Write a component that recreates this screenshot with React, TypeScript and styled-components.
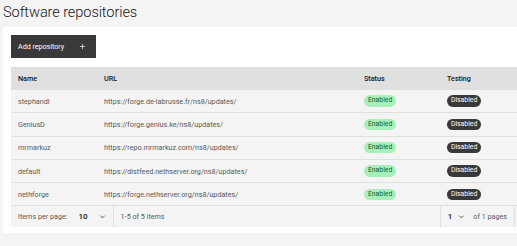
import * as React from "react";
import styled, { createGlobalStyle } from "styled-components";

const GlobalStyle = createGlobalStyle`
  html, body {
    margin: 0;
    padding: 0;
    background: #f4f4f4;
    overflow: hidden;
    font-family: Roboto, "Liberation Sans", sans-serif;
  }
`;

const SPage = styled.div`
  width: 540px;
  padding: 0 0 0 3px;
`;

const STitle = styled.h1`
  margin: 0;
  padding-top: 1px;
  height: 26px;
  font-size: 14.6px;
  font-weight: 300;
  letter-spacing: -0.1px;
  color: #161616;
  line-height: 22px;
`;

const SCard = styled.div`
  background: #ffffff;
  padding: 8px 8px 6px 8px;
`;

const SAddButton = styled.button`
  display: flex;
  align-items: center;
  justify-content: space-between;
  width: 85px;
  height: 23px;
  padding: 0 10px 0 7px;
  border: none;
  background: #393939;
  color: #ffffff;
  font-family: inherit;
  font-size: 7.1px;
  margin-bottom: 9px;
`;

const STable = styled.div`
  width: 100%;
  font-size: 7.2px;
`;

const SRow = styled.div<{ $head?: boolean }>`
  display: grid;
  grid-template-columns: 86px 260px 83px 1fr;
  align-items: center;
  height: ${(p) => (p.$head ? "23px" : "23.3px")};
  box-sizing: border-box;
  padding-left: 7px;
  background: ${(p) => (p.$head ? "#e0e0e0" : "#f4f4f4")};
  border-bottom: ${(p) => (p.$head ? "none" : "1px solid #e0e0e0")};
  color: ${(p) => (p.$head ? "#161616" : "#5a5a5a")};
  font-weight: ${(p) => (p.$head ? 500 : 400)};
`;

const SBadge = styled.span<{ $on: boolean }>`
  display: inline-block;
  width: fit-content;
  padding: 1px 4px;
  border-radius: 8px;
  font-size: 6.8px;
  line-height: 9.5px;
  background: ${(p) => (p.$on ? "#a7f0ba" : "#393939")};
  color: ${(p) => (p.$on ? "#0e6027" : "#ffffff")};
`;

const SFooter = styled.div`
  display: flex;
  align-items: stretch;
  height: 21px;
  background: #f4f4f4;
  color: #5a5a5a;
  font-size: 7.2px;
`;

const SFooterCell = styled.div<{ $grow?: boolean; $border?: boolean; $gap?: number }>`
  display: flex;
  align-items: center;
  gap: ${(p) => p.$gap ?? 11}px;
  padding: 0 7px;
  flex: ${(p) => (p.$grow ? 1 : "none")};
  border-right: ${(p) => (p.$border ? "1px solid #e0e0e0" : "none")};
`;

const SNavCell = styled.div`
  width: 20px;
`;

const SSelect = styled.span<{ $gap?: number }>`
  display: flex;
  align-items: center;
  gap: ${(p) => p.$gap ?? 11}px;
  color: #161616;
  font-size: 8px;
  font-weight: 500;
`;

const Chevron = () => (
  <svg width="7" height="7" viewBox="0 0 16 16" fill="none" stroke="#161616" strokeWidth="1.6">
    <path d="M3 6l5 5 5-5" />
  </svg>
);

const Plus = () => (
  <svg width="7" height="7" viewBox="0 0 16 16" fill="none" stroke="#ffffff" strokeWidth="1.5">
    <path d="M8 2v12M2 8h12" />
  </svg>
);

const repos = [
  { name: "stephandl", url: "https://forge.de-labrusse.fr/ns8/updates/" },
  { name: "GeniusD", url: "https://forge.genius.ke/ns8/updates/" },
  { name: "mrmarkuz", url: "https://repo.mrmarkuz.com/ns8/updates/" },
  { name: "default", url: "https://distfeed.nethserver.org/ns8/updates/" },
  { name: "nethforge", url: "https://forge.nethserver.org/ns8/updates/" },
];

const App = () => (
  <SPage>
    <GlobalStyle />
    <STitle>Software repositories</STitle>
    <SCard>
      <SAddButton>
        <span>Add repository</span>
        <Plus />
      </SAddButton>
      <STable>
        <SRow $head>
          <span>Name</span>
          <span>URL</span>
          <span>Status</span>
          <span>Testing</span>
        </SRow>
        {repos.map((r) => (
          <SRow key={r.name}>
            <span>{r.name}</span>
            <span>{r.url}</span>
            <SBadge $on>Enabled</SBadge>
            <SBadge $on={false}>Disabled</SBadge>
          </SRow>
        ))}
        <SFooter>
          <SFooterCell $border>
            <span>Items per page:</span>
            <SSelect>
              10 <Chevron />
            </SSelect>
          </SFooterCell>
          <SFooterCell $grow $border>
            <span>1-5 of 5 items</span>
          </SFooterCell>
          <SFooterCell $border $gap={8}>
            <SSelect $gap={6}>
              1 <Chevron />
            </SSelect>
            <span>of 1 pages</span>
          </SFooterCell>
          <SNavCell />
        </SFooter>
      </STable>
    </SCard>
  </SPage>
);

export default App;
